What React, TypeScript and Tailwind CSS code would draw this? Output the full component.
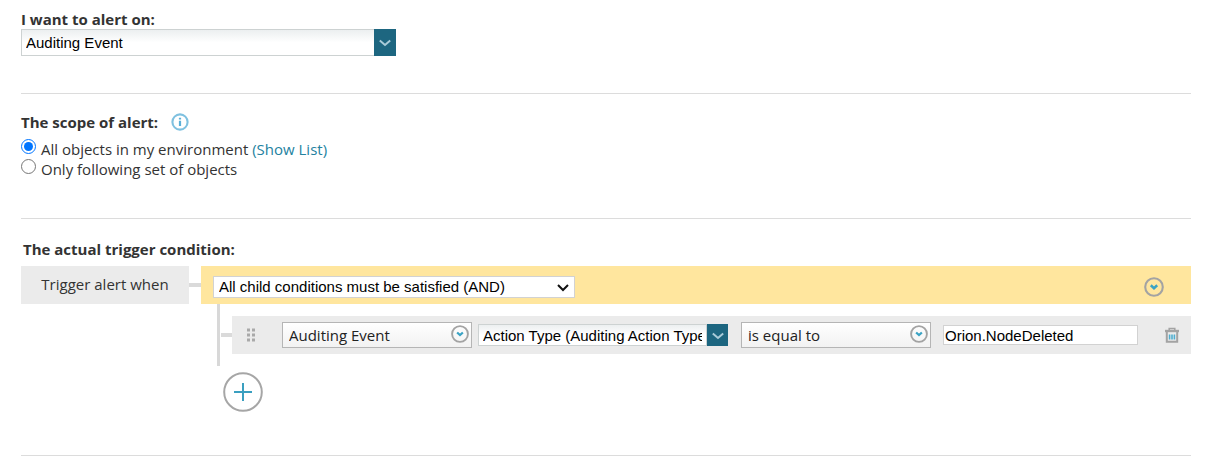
import { useState } from "react";

function Chevron() {
  return (
    <svg viewBox="0 0 12 8" className="w-3 h-2" fill="none" stroke="#a9cbd8" strokeWidth="2">
      <path d="M0.8 1.5 L6 6 L11.2 1.5" />
    </svg>
  );
}

function CircleArrow({ className }: { className: string }) {
  return (
    <svg viewBox="0 0 20 20" className={className} fill="none">
      <circle cx="10" cy="10" r="8.8" stroke="#a3a3a3" strokeWidth="2.1" />
      <path d="M6.8 8.3 L10 11.2 L13.2 8.3" stroke="#3aa3c4" strokeWidth="2.5" />
    </svg>
  );
}

function InfoIcon() {
  return (
    <svg viewBox="0 0 18 18" className="w-[18px] h-[18px]" fill="none">
      <circle cx="9" cy="9" r="7.6" stroke="#7fc1e0" strokeWidth="2.1" />
      <path d="M9 7.8 V13 M9 4.8 V6.6" stroke="#5bb0d8" strokeWidth="2.2" />
    </svg>
  );
}

function TrashIcon() {
  return (
    <svg viewBox="0 0 16 16" className="w-4 h-4" fill="none">
      <path d="M5.2 3 V1.4 H10.8 V3" stroke="#a3a3a3" strokeWidth="1.5" />
      <path d="M1 4 H15" stroke="#a3a3a3" strokeWidth="2.4" />
      <path d="M2.8 4.5 V14.7 H13.2 V4.5" stroke="#a3a3a3" strokeWidth="2" />
      <path d="M5.6 7.4 V12.6 M8 7.4 V12.6 M10.4 7.4 V12.6" stroke="#4faed0" strokeWidth="1.6" />
    </svg>
  );
}

function DragHandle() {
  return (
    <svg viewBox="0 0 8 14" className="w-2 h-[14px]" fill="#a9a9a9">
      {[0.5, 5.5, 10.5].map((y) => (
        <g key={y}>
          <rect x="0" y={y} width="3" height="3" />
          <rect x="5" y={y} width="3" height="3" />
        </g>
      ))}
    </svg>
  );
}

// select with the round arrow button
function RoundSelect({ label, value }: { label: string; value: string }) {
  return (
    <div className="relative w-[190px] shrink-0">
      <select
        aria-label={label}
        defaultValue={value}
        className="block w-full h-[26px] appearance-none border border-[#b5b5b5] bg-linear-to-b from-white to-[#f2f2f2] pl-1.5 pr-7 font-['Open_Sans',sans-serif] text-[15px] text-[#222]"
      >
        <option>{value}</option>
      </select>
      <CircleArrow className="absolute right-[3px] top-[3px] w-[18px] h-[18px] pointer-events-none" />
    </div>
  );
}

export default function App() {
  const [scope, setScope] = useState("all");

  return (
    <div className="bg-white pl-[21px] pr-[39px] font-['Open_Sans',sans-serif] text-[15px] leading-5 text-[#333]">
      {/* Object type */}
      <section className="pt-[9px] pb-[37px] border-b border-[#dcdcdc]">
        <label htmlFor="alert-on" className="block font-bold">I want to alert on:</label>
        <div className="flex w-[375px] h-[27px]">
          <input
            id="alert-on"
            type="text"
            defaultValue="Auditing Event"
            className="flex-1 min-w-0 border border-r-0 border-[#cdd2d2] bg-linear-to-b from-[#eceff0] to-white to-50% px-1 font-['Liberation_Sans',sans-serif] text-[15px] text-black"
          />
          <button type="button" aria-label="Show object types" className="w-[22px] grid place-items-center bg-[#1d6680]">
            <Chevron />
          </button>
        </div>
      </section>

      {/* Scope */}
      <section className="pt-[18px] pb-[39px] border-b border-[#dcdcdc]">
        <div className="flex items-center gap-[13px] mb-[7px]">
          <h2 className="font-bold">The scope of alert:</h2>
          <button type="button" aria-label="About scope"><InfoIcon /></button>
        </div>
        <div className="flex items-start gap-[5px]">
          <input
            id="scope-all"
            type="radio"
            name="scope"
            checked={scope === "all"}
            onChange={() => setScope("all")}
            className="w-[15px] h-[15px]"
          />
          <p>
            <label htmlFor="scope-all">All objects in my environment</label>{" "}
            <a href="#list" className="text-[#24829f]">(Show List)</a>
          </p>
        </div>
        <div className="flex items-start gap-[5px]">
          <input
            id="scope-set"
            type="radio"
            name="scope"
            checked={scope === "set"}
            onChange={() => setScope("set")}
            className="w-[15px] h-[15px]"
          />
          <label htmlFor="scope-set">Only following set of objects</label>
        </div>
      </section>

      {/* Trigger condition */}
      <section className="pt-5 pb-[43px] border-b border-[#dcdcdc]">
        <h2 className="pl-[2px] mb-[7px] font-bold">The actual trigger condition:</h2>
        <div className="flex items-center">
          <div className="w-[168px] h-[38px] shrink-0 bg-[#ebebeb] pt-2 text-center">Trigger alert when</div>
          <div className="w-3 h-1 shrink-0 bg-[#dadada]" />
          <div className="flex-1 h-[38px] flex items-center justify-between bg-[#ffe69e] pl-3 pr-[27px] pt-1">
            <div className="relative w-[362px]">
              <select
                aria-label="Condition operator"
                className="block w-full h-[22px] appearance-none border border-[#d2d2d2] bg-white pl-[5px] pr-5 font-['Liberation_Sans',sans-serif] text-[15px] text-black"
              >
                <option>All child conditions must be satisfied (AND)</option>
              </select>
              <svg viewBox="0 0 12 8" className="absolute right-1.5 top-2 w-3 h-2 pointer-events-none" fill="none" stroke="#111" strokeWidth="2">
                <path d="M1 1 L6 6 L11 1" />
              </svg>
            </div>
            <button type="button" aria-label="Group menu">
              <CircleArrow className="w-5 h-5" />
            </button>
          </div>
        </div>

        <div className="flex ml-[196px]">
          <div className="w-[3px] h-[62px] shrink-0 bg-[#d8d8d8]" />
          <div className="flex-1 flex items-center h-[38px] mt-3 ml-px">
            <div className="w-[11px] h-1 shrink-0 bg-[#dadada]" />
            <div className="flex-1 h-[38px] flex items-center bg-[#ebebeb] pl-[15px] pr-[11px]">
              <DragHandle />
              <div className="flex items-center ml-[27px]">
                <RoundSelect label="Object" value="Auditing Event" />
                <div className="flex w-[250px] h-[22px] shrink-0 ml-1.5 mr-[13px]">
                  <input
                    type="text"
                    aria-label="Field"
                    defaultValue="Action Type (Auditing Action Type)"
                    className="flex-1 min-w-0 border border-[#cdd2d2] bg-linear-to-b from-[#eceff0] to-white to-50% px-1 pt-[2px] font-['Liberation_Sans',sans-serif] text-[15px] text-black"
                  />
                  <button type="button" aria-label="Show fields" className="w-[21px] grid place-items-center bg-[#1d6680] pt-[2px]">
                    <Chevron />
                  </button>
                </div>
                <RoundSelect label="Comparison" value="is equal to" />
                <input
                  type="text"
                  aria-label="Value"
                  defaultValue="Orion.NodeDeleted"
                  className="w-[195px] h-5 ml-3 border border-[#d2d2d2] bg-white px-px pt-[2px] font-['Liberation_Sans',sans-serif] text-[15px] text-black"
                />
              </div>
              <button type="button" aria-label="Delete condition" className="ml-auto">
                <TrashIcon />
              </button>
            </div>
          </div>
        </div>

        <button type="button" aria-label="Add condition" className="block mt-1.5 ml-[202px]">
          <svg viewBox="0 0 40 40" className="w-10 h-10" fill="none">
            <circle cx="20" cy="20" r="18.8" stroke="#a6a6a6" strokeWidth="2" />
            <path d="M11 20 H29 M20 11 V29" stroke="#3a9fc0" strokeWidth="2" />
          </svg>
        </button>
      </section>
    </div>
  );
}
